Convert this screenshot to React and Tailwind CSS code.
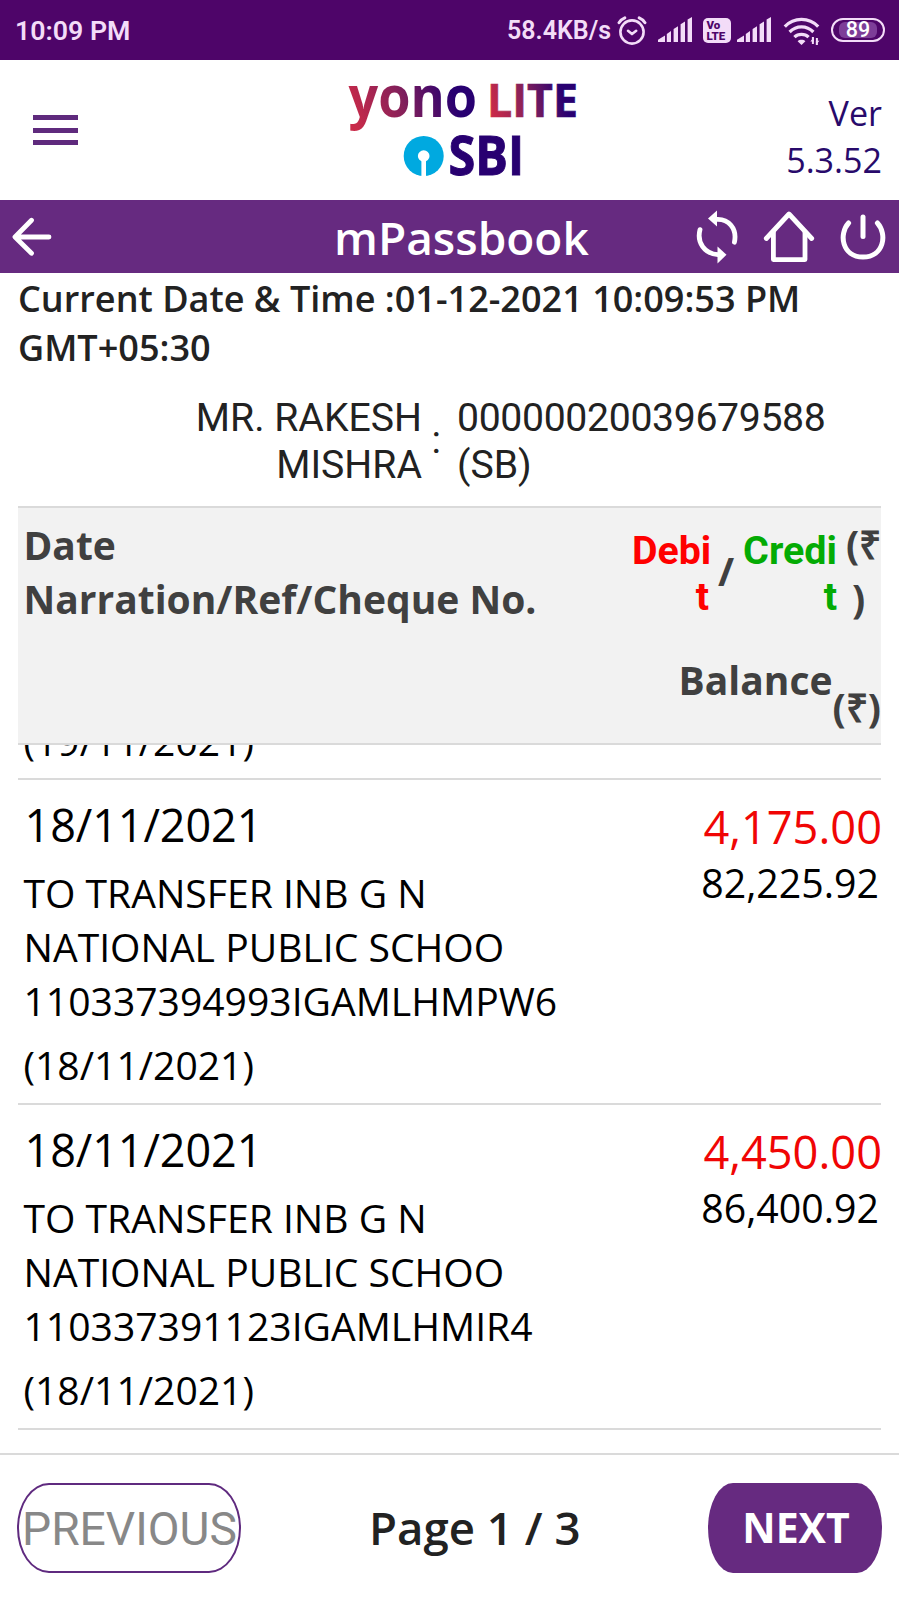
const transactions = [
  {
    date: '18/11/2021',
    lines: ['TO TRANSFER INB G N', 'NATIONAL PUBLIC SCHOO', '110337394993IGAMLHMPW6'],
    valueDate: '(18/11/2021)',
    amount: '4,175.00',
    balance: '82,225.92',
  },
  {
    date: '18/11/2021',
    lines: ['TO TRANSFER INB G N', 'NATIONAL PUBLIC SCHOO', '110337391123IGAMLHMIR4'],
    valueDate: '(18/11/2021)',
    amount: '4,450.00',
    balance: '86,400.92',
  },
]

function Signal({ className }) {
  return (
    <svg className={className} width="34" height="26" viewBox="0 0 34 26" fill="#f3dcf8">
      <path d="M0 25V22.8L7 18.5V25Z" />
      <path d="M8.8 25V17L13 14V25Z" />
      <path d="M15.6 25V12L20 9.2V25Z" />
      <path d="M22.6 25V7.2L27 4.4V25Z" />
      <path d="M29.6 25V2.4L34 0V25Z" />
    </svg>
  )
}

function StatusBar() {
  return (
    <div className="h-[60px] bg-[#4e0569] text-[#f3dcf8] font-[Roboto,sans-serif] font-semibold flex items-center pl-[15px] pr-[14px]">
      <span className="text-[26.7px] leading-[30px] pt-px">10:09 PM</span>
      <div className="ml-auto flex items-center">
        <span className="text-[25px] leading-[30px] pt-px mr-[6px]">58.4KB/s</span>
        {/* alarm */}
        <svg className="mt-px" width="30" height="30" viewBox="0 0 30 30" fill="none" stroke="#f3dcf8" strokeWidth="2.6" strokeLinecap="round">
          <circle cx="15" cy="16" r="11.6" />
          <path d="M2 6.7C3.4 4.5 5.4 2.9 7.8 1.9M28 6.7C26.6 4.5 24.6 2.9 22.2 1.9" strokeWidth="3" />
          <path d="M11 14.8L15 18.1L19.2 14.8" strokeLinejoin="round" />
        </svg>
        <Signal className="ml-[11px]" />
        <div className="ml-[11px] mt-px w-[28px] h-[25px] rounded-[5px] bg-[#f3dcf8] text-[#4e0569] font-[Roboto,sans-serif] font-black text-[11.5px] leading-[11px] pl-[3.5px] pt-[2px]">
          <div>Vo</div>
          <div>LTE</div>
        </div>
        <Signal className="ml-[6px]" />
        {/* wifi */}
        <svg className="ml-[12px] mt-px" width="37" height="30" viewBox="0 0 37 30" fill="none" stroke="#f3dcf8" strokeWidth="3.2">
          <path d="M1.8 10.6C11 1 26 1 35.2 10.6" />
          <path d="M6.6 16C13.4 9.2 23.6 9.2 30.4 16" />
          <path d="M11.4 21.2C15.2 17.4 21.8 17.4 25.6 21.2" />
          <path d="M14.6 25.2C16.6 23.4 20.4 23.4 22.4 25.2L18.5 29Z" fill="#f3dcf8" stroke="none" />
          <path d="M29.9 21V28M33.9 22V29" strokeWidth="2" />
          <path d="M27.4 25.4L30.9 21V25.4ZM36.4 24.8L32.9 29V24.8Z" fill="#f3dcf8" stroke="none" />
        </svg>
        <div className="ml-[11px] w-[54px] h-[24px] rounded-full border-[2.6px] border-[#f3dcf8] p-[2px] flex justify-center">
          <div className="w-[38px] h-[16px] bg-[#7d3d98] rounded-md flex items-center justify-center text-white font-medium text-[21.5px] leading-none">
            89
          </div>
        </div>
      </div>
    </div>
  )
}

function Logo() {
  return (
    <svg className="ml-[262px] overflow-visible" width="250" height="120" viewBox="340 70 250 120" fontFamily="'Open Sans', sans-serif" fontWeight="700">
      <defs>
        <linearGradient id="yono" gradientUnits="userSpaceOnUse" x1="355" y1="125" x2="452" y2="92">
          <stop offset="0" stopColor="#c92a49" />
          <stop offset="0.5" stopColor="#85205a" />
          <stop offset="1" stopColor="#280071" />
        </linearGradient>
        <linearGradient id="lite" gradientUnits="userSpaceOnUse" x1="492" y1="112" x2="562" y2="92">
          <stop offset="0" stopColor="#c92a49" />
          <stop offset="0.5" stopColor="#85205a" />
          <stop offset="1" stopColor="#280071" />
        </linearGradient>
      </defs>
      <text x="348.5" y="117.3" fontSize="58" textLength="128.5" lengthAdjust="spacingAndGlyphs" fill="url(#yono)">yono</text>
      <text x="487" y="117" fontSize="46" textLength="91" lengthAdjust="spacingAndGlyphs" fill="url(#lite)" stroke="url(#lite)" strokeWidth="0.6">LITE</text>
      <circle cx="423.7" cy="156" r="20" fill="#00a9e0" />
      <circle cx="423.7" cy="156" r="5.8" fill="#fff" />
      <path d="M421.4 158H426V177H421.4Z" fill="#fff" />
      <text x="448.5" y="175" fontSize="53.5" textLength="75.5" lengthAdjust="spacingAndGlyphs" fill="#280071" stroke="#280071" strokeWidth="1">SBI</text>
    </svg>
  )
}

function Header() {
  return (
    <header className="h-[140px] bg-white flex items-center pl-[33px] pr-[17px]">
      <button className="flex flex-col gap-[7.5px] w-[45px]">
        <span className="h-[5px] bg-[#5f2a7d]" />
        <span className="h-[5px] bg-[#5f2a7d]" />
        <span className="h-[5px] bg-[#5f2a7d]" />
      </button>
      <Logo />
      <div className="ml-auto w-[100px] text-right text-[34.1px] leading-[46.3px] text-[#280a6b] pt-[13px]">
        <div>Ver</div>
        <div>5.3.52</div>
      </div>
    </header>
  )
}

function NavBar() {
  return (
    <nav className="h-[73px] bg-[#662a80] text-white flex items-center pl-[11px] pr-[13px]">
      <svg width="42" height="42" viewBox="0 0 42 42" fill="none" stroke="currentColor" strokeWidth="4.8" strokeLinecap="round" strokeLinejoin="round">
        <path d="M20.5 4.2L4 21L20.5 37.2M4.5 21H38" />
      </svg>
      <h1 className="ml-[281px] text-[46px] font-semibold leading-[60px]">mPassbook</h1>
      <div className="ml-auto flex items-center gap-[25px]">
        {/* refresh */}
        <svg width="44" height="54" viewBox="0 0 44 54" fill="none" stroke="currentColor" strokeWidth="4.8" strokeLinecap="round">
          <path d="M22 9.4C34.4 8.4 43.4 18.4 40.4 32.2" />
          <path d="M6 19.6C2.6 32.4 10.4 43.6 24 44.6" />
          <path d="M23 0.5V16.5L14 8.5Z" fill="currentColor" stroke="none" />
          <path d="M23.5 36.5V53.5L32.5 44.8Z" fill="currentColor" stroke="none" />
        </svg>
        {/* home */}
        <svg width="52" height="54" viewBox="0 0 52 54" fill="none" stroke="currentColor" strokeWidth="4.8" strokeLinecap="round" strokeLinejoin="round">
          <path d="M3.3 28.5L26 4L48.7 28.5" />
          <path d="M10.4 22V49.6H42V22" />
        </svg>
        {/* power */}
        <svg width="46" height="50" viewBox="0 0 46 50" fill="none" stroke="currentColor" strokeWidth="5" strokeLinecap="round">
          <path d="M8.6 11C-1.5 22 2 45 23 45S47.5 22 37.4 11" />
          <path d="M23 5V24.6" />
        </svg>
      </div>
    </nav>
  )
}

function AccountInfo() {
  return (
    <div className="h-[233px] pt-px">
      <p className="pl-[18px] text-[36.05px] leading-[49.3px] font-semibold text-[#222] whitespace-pre">
        Current Date &amp; Time :01-12-2021 10:09:53 PM{'\n'}GMT+05:30
      </p>
      <div className="mt-[22.5px] flex font-[Roboto,sans-serif] text-[39.2px] leading-[46.6px] text-[#222]">
        <div className="w-[422px] text-right">
          <div>MR. RAKESH</div>
          <div>MISHRA</div>
        </div>
        <div className="w-[35px] pl-[9.5px] pt-[22px]">:</div>
        <div>
          <div className="tracking-[-0.35px]">00000020039679588</div>
          <div>(SB)</div>
        </div>
      </div>
    </div>
  )
}

function TableHead() {
  return (
    <div className="h-[239px] ml-[17.5px] mr-[18px] border-y-2 border-[#dadada] bg-[#f2f2f2] text-[#404040] font-bold text-[39px] leading-[54px] flex justify-between">
      <div className="pl-[6px] pt-[10px]">
        <div>Date</div>
        <div>Narration/Ref/Cheque No.</div>
      </div>
      <div>
        <div className="flex items-start justify-end h-[117px]">
          <div className="mt-[19.5px] w-[77px] text-right font-[Roboto,sans-serif] text-[39.3px] leading-[46.6px] text-[#ff0000]">
            <div>Debi</div>
            <div>t</div>
          </div>
          <div className="mt-[36px] ml-[9px] w-[18px]">/</div>
          <div className="mt-[19.5px] w-[101px] text-right font-[Roboto,sans-serif] text-[39.5px] leading-[46.6px] text-[#04ab04]">
            <div>Credi</div>
            <div>t</div>
          </div>
          <div className="mt-[9px] ml-[9px] w-[35px] whitespace-nowrap">
            <div>(₹</div>
            <div className="pl-[6px]">)</div>
          </div>
        </div>
        <div className="flex items-start justify-end mt-[28px]">
          <div>Balance</div>
          <div className="mt-[27px]">(₹)</div>
        </div>
      </div>
    </div>
  )
}

function Row({ tx }) {
  return (
    <div className="h-[325px] ml-[17.5px] mr-[18px] border-b-2 border-[#dadada] flex justify-between text-black text-[39.1px] leading-[54px]">
      <div className="pl-[6px] pt-[15px]">
        <div className="text-[45px] leading-[60px] pl-px tracking-[-0.1px]">{tx.date}</div>
        <div className="mt-[11px]">
          {tx.lines.map(line => <div key={line}>{line}</div>)}
        </div>
        <div className="mt-[10px]">{tx.valueDate}</div>
      </div>
      <div className="text-right pt-[17px] -mr-px">
        <div className="text-[45.2px] leading-[60px] text-[#f00505]">{tx.amount}</div>
        <div className="-mt-px pr-[3px] text-[39.3px]">{tx.balance}</div>
      </div>
    </div>
  )
}

function Pager() {
  return (
    <footer className="h-[146px] border-t-2 border-[#dadada] bg-white flex items-center px-[17px] pt-px">
      <button className="w-[224px] h-[90px] rounded-[32px/45px] border-2 border-[#5f2a7f] font-[Roboto,sans-serif] text-[46.2px] leading-[50px] text-[#888] pt-[3px] flex justify-center">
        <span className="self-center pl-px">PREVIOUS</span>
      </button>
      <span className="ml-[128px] text-[45.6px] font-semibold text-[#222] whitespace-nowrap">Page 1 / 3</span>
      <button className="ml-auto w-[174px] h-[90px] rounded-[25px/45px] bg-[#662a80] text-white font-bold text-[41px] pt-px pl-0.5">
        NEXT
      </button>
    </footer>
  )
}

export default function App() {
  return (
    <div className="w-[899px] h-[1599px] overflow-hidden bg-white font-['Open_Sans',sans-serif]">
      <StatusBar />
      <Header />
      <NavBar />
      <AccountInfo />
      <TableHead />
      {/* tail of the row scrolled under the head */}
      <div className="h-[35px] ml-[17.5px] mr-[18px] overflow-hidden border-b-2 border-[#dadada] pl-[6px]">
        <div className="mt-[-31px] text-black text-[39.1px] leading-[54px]">(19/11/2021)</div>
      </div>
      {transactions.map((tx, i) => <Row key={i} tx={tx} />)}
      <div className="h-[23px]" />
      <Pager />
    </div>
  )
}
